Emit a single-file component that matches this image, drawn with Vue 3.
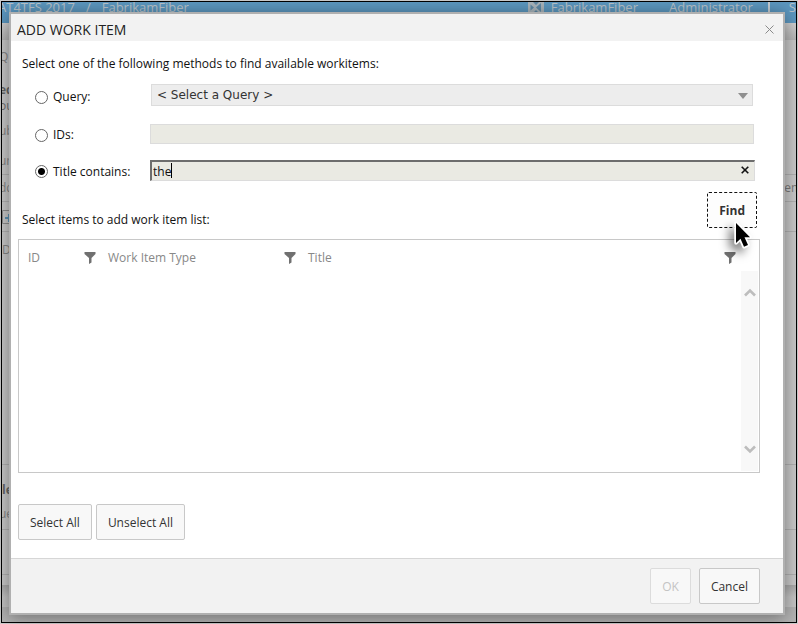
<script setup>
import { ref } from 'vue'

const method = ref('title')
const ids = ref('')
const title = ref('the')
const columns = [
  { name: 'ID', cls: 'col-id' },
  { name: 'Work Item Type', cls: 'col-type' },
  { name: 'Title', cls: 'col-title' },
]
const rows = [
  { h: 34, left: 'Q' },
  { h: 24, left: 'eq', strong: true },
  { h: 16, left: 'ou', dark: true },
  { h: 34, left: 'ub' },
  { h: 27, left: 'ur', line: true },
  { h: 27, left: 'dd', right: 'em', line: true },
  { h: 30, left: '', icon: true, line: true },
  { h: 36, left: 'D', inset: true },
  { h: 197, left: '', line: true },
  { h: 33, left: 'le', strong: true, inset: true },
  { h: 32, left: 'ue', line: true },
  { h: 45, left: '', line: true },
  { h: 10, left: '' },
]
</script>

<template>
  <div class="screen">
    <div class="page">
      <header class="topbar">
        <span class="crumbs">
          <span>AT4TFS 2017</span>
          <span>/</span>
          <span>FabrikamFiber</span>
        </span>
        <span class="account">
          <svg class="vs" viewBox="0 0 16 11"><path d="M0 0h16v11H0z" fill="#a9b5bc" /><path d="M2.500 2.500l3.500 3-3.500 3zM13 1L8 5.500 13 10z" fill="#5e89a6" /><path d="M5 0l3 3 3-3zM5 11l3-3 3 3z" fill="#5e89a6" /></svg>
          <span>FabrikamFiber</span>
          <span class="user">Administrator</span>
          <span class="bar"></span>
          <span>S</span>
        </span>
      </header>
      <div class="toolbar"></div>
      <div class="sheet">
        <div
          v-for="(r, i) in rows"
          :key="i"
          class="line"
          :class="{ ruled: r.line, strong: r.strong, dark: r.dark, inset: r.inset }"
          :style="{ height: r.h + 'px' }"
        >
          <svg v-if="r.icon" class="plus" viewBox="0 0 14 14"><path d="M.5 .5h13v13H.5z" fill="none" stroke="#8c8c8c" /><path d="M3 8h8M7 4v8" stroke="#5f93b3" stroke-width="2" /></svg>
          <span v-else class="near">{{ r.left }}</span>
          <span class="far">{{ r.right }}</span>
        </div>
      </div>
      <div class="under"></div>
      <div class="foot"></div>
    </div>

    <section class="dialog" role="dialog" aria-labelledby="dlg-title">
      <div class="titlebar">
        <h1 id="dlg-title">ADD WORK ITEM</h1>
        <button class="close" type="button" aria-label="Close">
          <svg viewBox="0 0 9 9"><path d="M.5 .5l8 8M8.500 .5l-8 8" stroke="#8a8a8a" /></svg>
        </button>
      </div>

      <div class="body">
        <p>Select one of the following methods to find available workitems:</p>
        <div class="form">
          <div class="method">
            <input id="m-query" v-model="method" type="radio" name="method" value="query" />
            <label for="m-query">Query:</label>
          </div>
          <div class="field query">
            <select aria-label="Query"><option>&lt; Select a Query &gt;</option></select>
            <svg class="arrow" viewBox="0 0 10 6"><path d="M0 0h10L5 6z" fill="#8f8f8f" /></svg>
          </div>
          <div class="method">
            <input id="m-ids" v-model="method" type="radio" name="method" value="ids" />
            <label for="m-ids">IDs:</label>
          </div>
          <div class="field ids"><input v-model="ids" type="text" aria-label="IDs" /></div>
          <div class="method">
            <input id="m-title" v-model="method" type="radio" name="method" value="title" />
            <label for="m-title">Title contains:</label>
          </div>
          <div class="field title">
            <input v-model="title" type="text" aria-label="Title contains" />
            <span class="caret"></span>
            <button class="clear" type="button" aria-label="Clear" @click="title = ''">
              <svg viewBox="0 0 8 8"><path d="M.7 .7l6.600 6.600M7.300 .7L.7 7.300" stroke="#111" stroke-width="1.600" /></svg>
            </button>
          </div>
        </div>

        <div class="find-row">
          <p>Select items to add work item list:</p>
          <button class="btn find" type="button">Find
            <svg class="cursor" viewBox="0 0 20 32" aria-hidden="true"><path d="M3 3v20l4.500-4.200 3.500 8 4-1.800-3.500-7.800H17z" fill="#000" stroke="#fff" stroke-width="3.500" stroke-linejoin="round" paint-order="stroke" /></svg>
          </button>
        </div>

        <div class="grid">
          <table>
            <thead>
              <tr>
                <th v-for="c in columns" :key="c.name" :class="c.cls">
                  <div class="th">
                    <span>{{ c.name }}</span>
                    <svg class="funnel" viewBox="0 0 12 12"><path d="M.5 0h11v2L7.500 6v4.500L5 12V6L.5 2z" fill="#707070" /></svg>
                  </div>
                </th>
              </tr>
            </thead>
          </table>
          <div class="scroll">
            <svg viewBox="0 0 12 9"><path d="M1 7.500l5-5 5 5" fill="none" stroke="#bdbdbd" stroke-width="2.600" /></svg>
            <svg viewBox="0 0 12 9"><path d="M1 1.500l5 5 5-5" fill="none" stroke="#bdbdbd" stroke-width="2.600" /></svg>
          </div>
        </div>

        <div class="select-row">
          <button class="btn" type="button">Select All</button>
          <button class="btn" type="button">Unselect All</button>
        </div>
      </div>

      <div class="actions">
        <button class="btn" type="button" disabled>OK</button>
        <button class="btn" type="button">Cancel</button>
      </div>
    </section>
  </div>
</template>

<style>
body {
  background: #cdcdcd;
}
</style>

<style scoped>
* {
  box-sizing: border-box;
}
.screen {
  position: relative;
  display: flex;
  min-height: 100vh;
  padding: 12px 13px 9px 9px;
  font: 12px/16px "Open Sans", "Noto Sans", sans-serif;
  color: #111;
}
.page {
  position: absolute;
  inset: 1px;
  display: flex;
  flex-direction: column;
  overflow: hidden;
  border: 1px solid #000;
  background: #c8c8c8;
  color: #858585;
}
.topbar {
  flex: none;
  display: flex;
  justify-content: space-between;
  height: 21px;
  background: #5c97bf;
  color: #b9c3c9;
  font-size: 13px;
  line-height: 10px;
  white-space: nowrap;
}
.crumbs {
  display: flex;
  gap: 11px;
  margin-left: -4px;
}
.account {
  display: flex;
}
.vs {
  width: 16px;
  height: 11px;
  margin-right: 7px;
}
.user {
  margin-left: 31px;
}
.bar {
  width: 2px;
  height: 10px;
  margin: 0 19px 0 15px;
  background: #c5ced4;
}
.toolbar {
  flex: none;
  height: 17px;
  background: linear-gradient(#cfcfcf, #b4b4b4);
}
.sheet {
  flex: none;
}
.line {
  display: flex;
  justify-content: space-between;
  align-items: center;
}
.ruled {
  border-bottom: 1px solid #b0b0b0;
}
.strong {
  align-items: flex-end;
  font-weight: 700;
  color: #666;
}
.dark {
  color: #707070;
}
.near {
  margin-left: -3px;
}
.inset .near {
  margin-left: 0;
}
.plus {
  width: 14px;
  height: 14px;
}
.far {
  margin-right: -6px;
  color: #777;
}
.under {
  flex: 1;
  background: linear-gradient(#a8a8a8, #c4c4c4 12px);
}
.foot {
  flex: none;
  height: 15px;
  background: #b2b2b2;
}
.dialog {
  position: relative;
  flex: 1;
  min-width: 0;
  display: flex;
  flex-direction: column;
  border: 2px solid #b0b0b0;
  background: #fff;
  box-shadow: 0 2px 16px rgba(0, 0, 0, 0.4);
}
.titlebar {
  display: flex;
  justify-content: space-between;
  align-items: center;
  height: 27px;
  padding: 4px 9px 0 6px;
  background: #f2f2f2;
}
h1 {
  margin: 0;
  font-size: 14px;
  line-height: 20px;
  font-weight: 400;
  color: #222;
}
button {
  font: inherit;
  color: inherit;
}
.close,
.clear {
  display: flex;
  padding: 0;
  border: 0;
  background: none;
}
.close svg {
  width: 9px;
  height: 9px;
}
.body {
  flex: 1;
  display: flex;
  flex-direction: column;
  padding: 15px 23px 18px 7px;
}
p {
  margin: 0;
  padding-left: 4px;
}
.form {
  display: grid;
  grid-template-columns: 132px 1fr;
  grid-template-rows: 24px 20px 21px;
  row-gap: 16px;
  margin-top: 12px;
  padding-right: 5px;
}
.method {
  display: flex;
  align-items: center;
  gap: 5px;
  padding: 2px 0 0 17px;
}
.method input {
  appearance: none;
  width: 13px;
  height: 13px;
  margin: 0;
  border: 1px solid #666;
  border-radius: 50%;
  background: #fff;
}
.method input:checked {
  background: radial-gradient(circle, #000 3px, #fff 4px);
}
.field {
  position: relative;
  display: flex;
}
.field select,
.field input {
  flex: 1;
  min-width: 0;
  margin: 0;
  border: 1px solid #dcdcdc;
  border-radius: 0;
  outline: 0;
  background: #eaeae3;
  font: inherit;
  color: #111;
}
.query {
  height: 22px;
}
.field select {
  appearance: none;
  margin: 0 2px 0 1px;
  padding: 0 4px 0 5px;
  background: #ededed;
  font-family: "DejaVu Sans", sans-serif;
  color: #333;
}
.arrow {
  position: absolute;
  right: 7px;
  top: 9px;
  width: 10px;
  height: 6px;
}
.ids {
  margin-right: 1px;
}
.title input {
  padding: 1px 24px 0 1px;
  border-top: 2px solid #6d6d6d;
  border-left: 2px solid #6d6d6d;
}
.caret {
  position: absolute;
  left: 21px;
  top: 3px;
  width: 1px;
  height: 15px;
  background: #000;
}
.clear {
  position: absolute;
  right: 6px;
  top: 6px;
}
.clear svg {
  width: 8px;
  height: 8px;
}
.find-row {
  display: flex;
  justify-content: space-between;
  align-items: flex-end;
  margin-top: 11px;
  padding-right: 3px;
}
.btn {
  height: 36px;
  padding: 1px 11px 0;
  border: 1px solid #c8c8c8;
  border-radius: 2px;
  background: #f8f8f8;
  color: #333;
}
.btn:disabled {
  border-color: #dcdcdc;
  color: #c4c4c4;
}
.find {
  position: relative;
  border: 1px dashed #111;
  background: #fdfdfd;
  font-weight: 700;
}
.cursor {
  position: absolute;
  left: 25px;
  top: 27px;
  z-index: 2;
  width: 20px;
  height: 32px;
  overflow: visible;
  filter: drop-shadow(-5px 5px 5px rgba(0, 0, 0, 0.5));
}
.grid {
  flex: 1;
  display: flex;
  flex-direction: column;
  min-height: 200px;
  margin-top: 11px;
  border: 1px solid #c8c8c8;
}
table {
  width: calc(100% - 20px);
  table-layout: fixed;
  border-collapse: collapse;
}
th {
  height: 31px;
  padding: 4px 3px 0 9px;
  text-align: left;
  font-weight: 400;
  color: #888;
}
.col-id {
  width: 80px;
}
.col-type {
  width: 200px;
}
.th {
  display: flex;
  justify-content: space-between;
  align-items: center;
}
.funnel {
  width: 12px;
  height: 12px;
}
.scroll {
  flex: 1;
  display: flex;
  flex-direction: column;
  justify-content: space-between;
  align-items: center;
  align-self: flex-end;
  width: 17px;
  margin: 0 1px 1px 0;
  padding: 17px 0;
  background: #f8f8f8;
}
.scroll svg {
  width: 12px;
  height: 9px;
}
.select-row {
  display: flex;
  gap: 4px;
  margin-top: 31px;
}
.actions {
  display: flex;
  justify-content: flex-end;
  gap: 8px;
  padding: 9px 23px;
  border-top: 1px solid #d6d6d6;
  background: #f2f2f2;
}
</style>
